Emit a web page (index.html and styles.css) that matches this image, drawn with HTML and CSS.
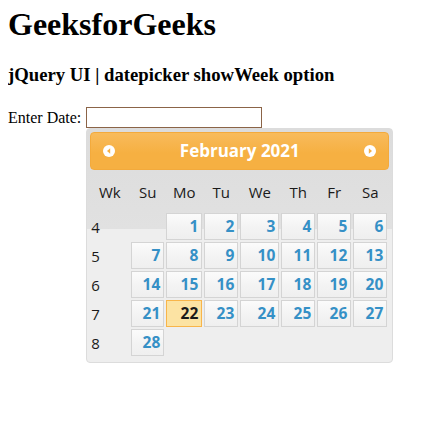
FILE: index.html
```html
<!DOCTYPE html>
<html>
<head>
<meta charset="utf-8">
<link rel="stylesheet" href="styles.css">
</head>
<body>
<h1 class="title">GeeksforGeeks</h1>
<h3 class="subtitle">jQuery UI | datepicker showWeek option</h3>
<div class="field">
  <span class="label">Enter Date:</span>
  <input class="date-input" type="text">
  <div class="calendar">
    <div class="cal-head">
      <span class="cal-nav">
        <svg width="12" height="12" viewBox="0 0 12 12"><circle cx="6" cy="6" r="6" fill="#fff"/><path d="M7.2 3.2 L4 6 L7.2 8.8 Z" fill="#f6b042"/></svg>
      </span>
      <span class="cal-title">February 2021</span>
      <span class="cal-nav">
        <svg width="12" height="12" viewBox="0 0 12 12"><circle cx="6" cy="6" r="6" fill="#fff"/><path d="M4.8 3.2 L8 6 L4.8 8.8 Z" fill="#f6b042"/></svg>
      </span>
    </div>
    <div class="cal-grid">
      <div class="th">Wk</div><div class="th">Su</div><div class="th">Mo</div><div class="th">Tu</div><div class="th">We</div><div class="th">Th</div><div class="th">Fr</div><div class="th">Sa</div>

      <div class="wk">4</div><div class="empty"></div><div class="day">1</div><div class="day">2</div><div class="day">3</div><div class="day">4</div><div class="day">5</div><div class="day">6</div>

      <div class="wk">5</div><div class="day">7</div><div class="day">8</div><div class="day">9</div><div class="day">10</div><div class="day">11</div><div class="day">12</div><div class="day">13</div>

      <div class="wk">6</div><div class="day">14</div><div class="day">15</div><div class="day">16</div><div class="day">17</div><div class="day">18</div><div class="day">19</div><div class="day">20</div>

      <div class="wk">7</div><div class="day">21</div><div class="day today">22</div><div class="day">23</div><div class="day">24</div><div class="day">25</div><div class="day">26</div><div class="day">27</div>

      <div class="wk">8</div><div class="day">28</div><div class="empty"></div><div class="empty"></div><div class="empty"></div><div class="empty"></div><div class="empty"></div><div class="empty"></div>
    </div>
  </div>
</div>
</body>
</html>
```
FILE: styles.css
```css
body {
  margin: 0 8px 8px;
  font-family: "Liberation Serif", "Times New Roman", serif;
  color: #000;
  background: #fff;
}
.title {
  font-size: 32px;
  font-weight: bold;
  margin: 6px 0 21px;
}
.subtitle {
  font-size: 18.72px;
  font-weight: bold;
  margin: 18px 0 21px;
}
.field {
  font-size: 16px;
  display: grid;
  grid-template-columns: auto auto;
  justify-content: start;
  align-items: center;
  column-gap: 5px;
}
.label {
  grid-column: 1;
  grid-row: 1;
}
.date-input {
  grid-column: 2;
  grid-row: 1;
  justify-self: start;
  display: block;
  box-sizing: border-box;
  width: 176px;
  height: 21px;
  margin: 0;
  border: 1px solid #8b6447;
  padding: 1px 2px;
  outline: none;
}
.calendar {
  grid-column: 2;
  grid-row: 2;
  justify-self: start;
  box-sizing: border-box;
  width: 307px;
  height: 235px;
  padding: 3px;
  border: 1px solid #dcdcdc;
  border-radius: 4px;
  background-color: #eeeeee;
  background-image: linear-gradient(#dcdcdc, #e1e1e1);
  background-size: 100% 100px;
  background-repeat: no-repeat;
  font-family: "Open Sans", "Liberation Sans", sans-serif;
}
.cal-head {
  box-sizing: border-box;
  height: 38px;
  display: flex;
  align-items: center;
  padding: 0 12px;
  border: 1px solid #f3aa3c;
  border-radius: 4px;
  background: linear-gradient(#f8bb5c, #f6b042 55%, #f6b042);
}
.cal-nav {
  width: 12px;
  height: 12px;
  display: flex;
}
.cal-title {
  flex: 1;
  text-align: center;
  color: #fff;
  font-weight: bold;
  font-size: 17px;
  line-height: 20px;
}
.cal-grid {
  display: grid;
  grid-template-columns: 39px 33px 36px 34px 39px 34px 34px 34px;
  grid-template-rows: 41px repeat(5, 27px);
  column-gap: 2px;
  row-gap: 2px;
}
.th {
  display: flex;
  align-items: center;
  justify-content: center;
  font-size: 15px;
  color: #1a1a1a;
  padding-top: 2px;
}
.wk {
  display: flex;
  align-items: center;
  padding-left: 1px;
  font-size: 15px;
  color: #1a1a1a;
}
.day {
  box-sizing: border-box;
  border: 1px solid #d4d4d4;
  background: linear-gradient(#fbfbfb, #f3f3f3 55%, #efefef);
  color: #3590c6;
  font-weight: bold;
  font-size: 15.5px;
  text-align: right;
  padding: 0 3px 0 0;
  line-height: 25px;
}
.day.today {
  border-color: #f8b54a;
  background: #fce3a3;
  color: #1a1a1a;
}
```
